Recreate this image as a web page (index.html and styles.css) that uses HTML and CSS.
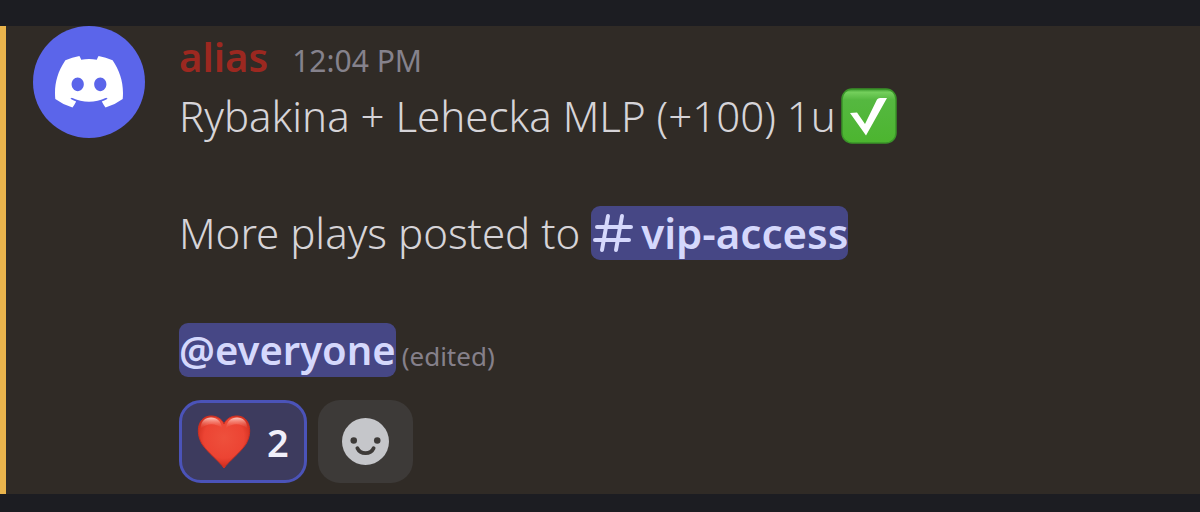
FILE: index.html
```html
<!DOCTYPE html>
<html lang="en">
<head>
    <meta charset="UTF-8">
    <meta name="viewport" content="width=device-width, initial-scale=1">
    <title>Message</title>
    <link rel="stylesheet" href="styles.css">
</head>
<body>
<article class="message">
    <div class="avatar">
        <svg class="avatar-logo" viewBox="0 0 127.14 96.36" aria-hidden="true">
            <path fill="#fff" d="M107.7,8.07A105.15,105.15,0,0,0,81.47,0a72.06,72.06,0,0,0-3.36,6.83A97.68,97.68,0,0,0,49,6.83,72.37,72.37,0,0,0,45.64,0,105.89,105.89,0,0,0,19.39,8.09C2.79,32.65-1.71,56.6.54,80.21h0A105.73,105.73,0,0,0,32.71,96.36,77.7,77.7,0,0,0,39.6,85.25a68.42,68.42,0,0,1-10.85-5.18c.91-.66,1.8-1.34,2.66-2a75.57,75.57,0,0,0,64.32,0c.87.71,1.76,1.39,2.66,2a68.68,68.68,0,0,1-10.87,5.19,77,77,0,0,0,6.89,11.1A105.25,105.25,0,0,0,126.6,80.22h0C129.24,52.84,122.09,29.11,107.7,8.07ZM42.45,65.69C36.18,65.69,31,60,31,53s5-12.74,11.43-12.74S54,46,53.89,53,48.84,65.69,42.45,65.69Zm42.24,0C78.41,65.69,73.25,60,73.25,53s5-12.74,11.44-12.74S96.23,46,96.12,53,91.08,65.69,84.69,65.69Z"/>
        </svg>
    </div>
    <div class="content">
        <header class="message-header">
            <span class="username">alias</span>
            <time class="timestamp" datetime="12:04">12:04 PM</time>
        </header>
        <div class="message-text">
            <p>Rybakina + Lehecka MLP (+100) 1u<svg class="check" viewBox="0 0 56 56" role="img" aria-label="check mark">
                    <defs>
                        <linearGradient id="checkFill" x1="0" y1="0" x2="0" y2="1">
                            <stop offset="0" stop-color="#3a9a2c"/>
                            <stop offset="0.06" stop-color="#74cf5c"/>
                            <stop offset="0.2" stop-color="#55b840"/>
                            <stop offset="1" stop-color="#4cb52f"/>
                        </linearGradient>
                    </defs>
                    <rect x="1" y="1" width="54" height="54" rx="10" fill="url(#checkFill)" stroke="#3a9429" stroke-width="1.5"/>
                    <path fill="#fff" d="M9 25L16 24.500L24 36L36 11.500Q37 10 39 10H46L25 47.500Z"/>
                </svg>
            </p>
            <p>More plays posted to
                <a class="mention" href="#vip-access"><svg class="hash" viewBox="0 0 40 40" aria-hidden="true"><path fill="none" stroke="currentColor" stroke-width="4" stroke-linecap="round" d="M15 3L9 37M29 3L23 37M4 14H38M2 27H36"/></svg>vip-access</a>
            </p>
            <p><a class="mention mention-role" href="#everyone">@everyone</a><span class="edited">(edited)</span></p>
        </div>
        <div class="reactions">
            <button class="reaction active" type="button" aria-label="Heart, 2 reactions">
                <svg class="heart" viewBox="0 0 54 54" aria-hidden="true">
                    <defs>
                        <radialGradient id="heartFill" cx="0.5" cy="0.42" r="0.6">
                            <stop offset="0" stop-color="#ee503c"/>
                            <stop offset="0.65" stop-color="#ec4433"/>
                            <stop offset="1" stop-color="#c92819"/>
                        </radialGradient>
                        <linearGradient id="heartShine" x1="0" y1="0" x2="0" y2="1">
                            <stop offset="0" stop-color="#ffd8cf" stop-opacity="0.9"/>
                            <stop offset="1" stop-color="#f4604c" stop-opacity="0"/>
                        </linearGradient>
                    </defs>
                    <path fill="url(#heartFill)" stroke="#d02f20" stroke-width="1" d="M27 53C22 46 11 38 5 29C-2 17 1 1 14 1C20 1 25 4 27 9C29 4 34 1 40 1C53 1 56 17 49 29C43 38 32 46 27 53Z"/>
                    <path fill="url(#heartShine)" d="M3.500 14C4 6 8 2.500 14 2.500C20 2.500 24 6 25 13C18 8 10 8 3.500 14ZM29 13C30 6 34 2.500 40 2.500C46 2.500 50 6 50.500 14C44 8 36 8 29 13Z"/>
                </svg>
                <span class="count">2</span>
            </button>
            <button class="reaction" type="button" aria-label="Add reaction">
                <svg class="smiley" viewBox="0 0 46 46" aria-hidden="true">
                    <circle cx="23" cy="23" r="23" fill="#c5c6ca"/>
                    <circle cx="11.500" cy="22" r="3.200" fill="#3d3a38"/>
                    <circle cx="34.500" cy="22" r="3.200" fill="#3d3a38"/>
                    <path fill="none" stroke="#3d3a38" stroke-width="3.600" stroke-linecap="round" d="M15 29.500C18 36 28 36 31 29.500"/>
                </svg>
            </button>
        </div>
    </div>
</article>
</body>
</html>
```
FILE: styles.css
```css
* { box-sizing: border-box; }
body { margin: 0; padding: 26px 0 18px; background: #1c1d22; font-family: "Noto Sans", sans-serif; color: #d6d4d8; }
p { margin: 0; }
.message { display: flex; gap: 34px; padding: 0 24px 11px 27px; background: #302b26; border-left: 6px solid #e9b44c; }
.avatar { display: flex; align-items: center; justify-content: center; flex: none; width: 112px; height: 112px; border-radius: 50%; background: #5b65ea; }
.avatar-logo { width: 68px; }
.content { flex: 1; min-width: 0; }
.message-header { display: flex; align-items: baseline; gap: 24px; height: 63px; line-height: 62px; }
.username { color: #9c2820; font-size: 40px; font-weight: 600; }
.timestamp { color: #85828c; font-size: 30px; }
.message-text { display: flex; flex-direction: column; gap: 63px; font-size: 42px; font-weight: 300; line-height: 54px; }
.check { width: 56px; height: 56px; margin: -1px 0 -1px 5px; vertical-align: top; }
.mention { display: inline-block; border-radius: 9px; background: #464785; color: #d5d8fc; font-weight: 600; text-decoration: none; vertical-align: top; }
.mention-role { font-size: 40px; }
.hash { width: 40px; height: 40px; margin: 0 8px 0 2px; vertical-align: -4px; }
.edited { margin-left: 6px; color: #85808a; font-size: 26px; font-weight: 400; line-height: 26px; }
.reactions { display: flex; gap: 11px; margin-top: 23px; }
.reaction { display: flex; align-items: center; justify-content: center; gap: 16px; height: 83px; padding: 0 24px; border: 0; border-radius: 22px; background: #3d3a38; font-family: inherit; cursor: pointer; }
.reaction.active { padding: 0 15px; border: 3px solid #4b53b8; background: #3d3b5e; }
.heart { width: 54px; height: 54px; }
.smiley { width: 47px; height: 47px; }
.count { color: #f0effa; font-size: 38px; font-weight: 600; line-height: 48px; }
```
